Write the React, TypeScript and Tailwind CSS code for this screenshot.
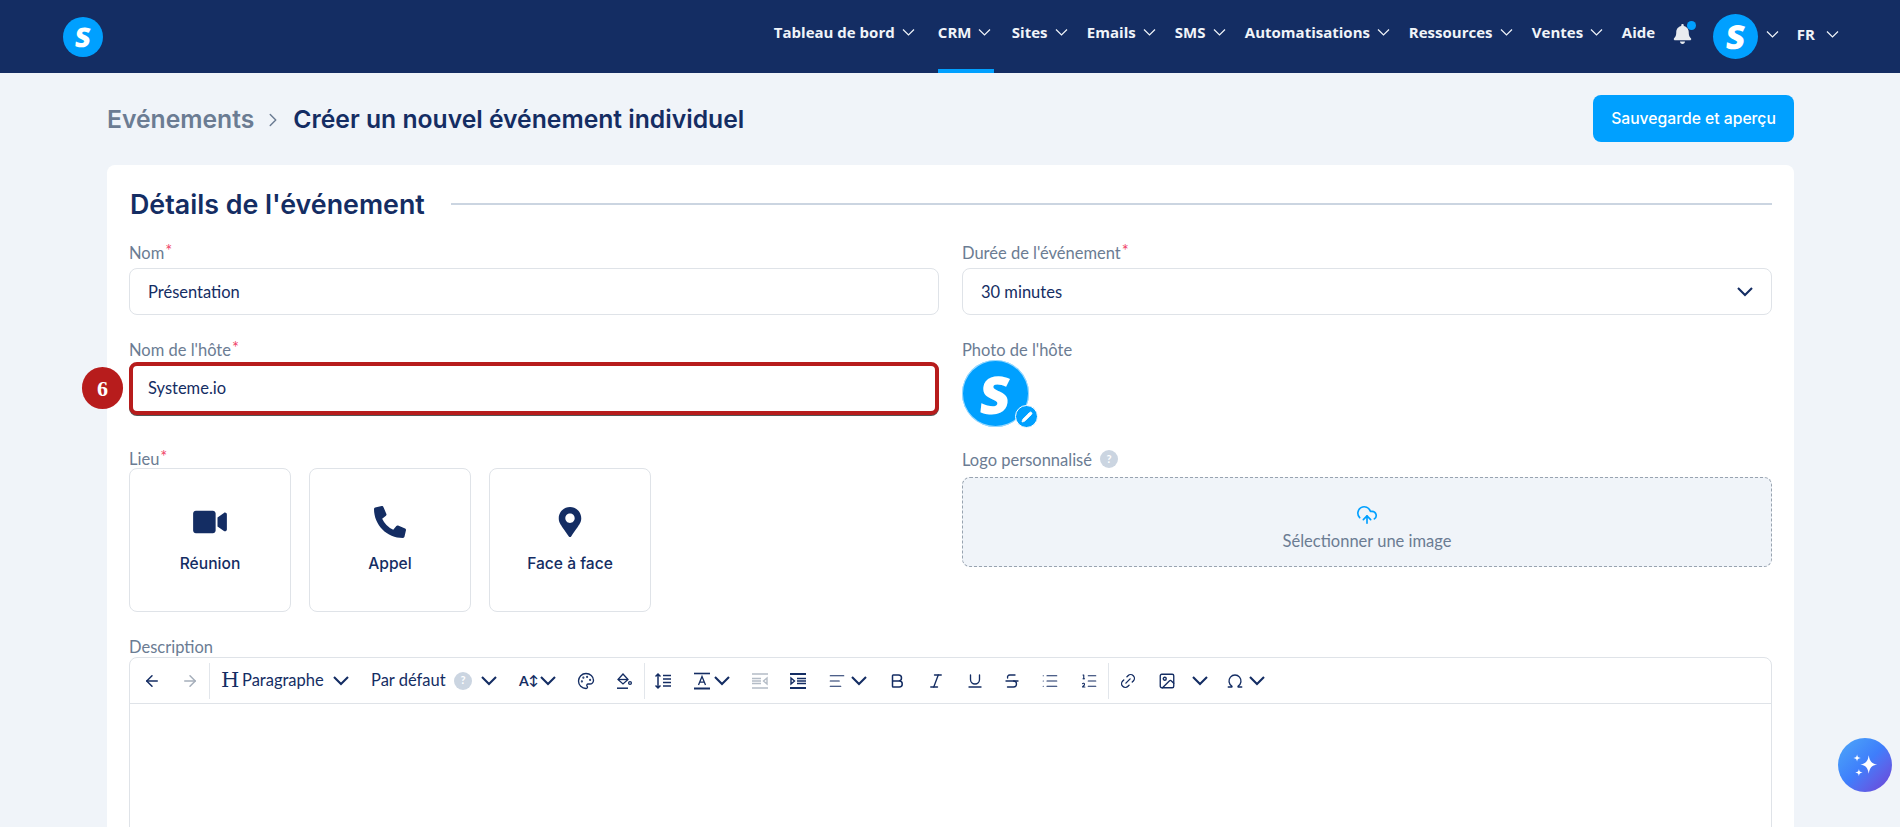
import React from "react";
import { ChevronRight, ArrowLeft, ArrowRight, Palette, Link2, Bold, Italic, Underline, Strikethrough, List, ListOrdered, Omega, CloudUpload, Image as ImageIcon, AlignLeft, Pencil } from "lucide-react";
import { FaVideo, FaPhoneAlt, FaMapMarkerAlt, FaBell } from "react-icons/fa";

function SLogo({ className }: { className: string }) {
  return (
    <div className={`flex items-center justify-center rounded-full bg-[#00a0ff] text-white font-['Open_Sans',sans-serif] font-extrabold leading-none ${className}`}>
      <span className="inline-block -skew-x-6">S</span>
    </div>
  );
}

function NavChev({ cls = "" }: { cls?: string }) {
  return (
    <svg viewBox="0 0 13 13" className={`h-[13px] w-[13px] text-[#f0f4f9] ${cls}`} fill="none" stroke="currentColor" strokeWidth="1.2">
      <path d="M1 3.5 L6.5 9 L12 3.5" />
    </svg>
  );
}

function NavItem({ label, width, active, chevron = true }: { label: string; width: string; active?: boolean; chevron?: boolean }) {
  return (
    <div className={`relative flex h-[73px] items-center pb-[9px] ${width}`}>
      <span className="font-['Open_Sans',sans-serif] text-[15px] font-bold leading-none text-[#f0f4f9]">{label}</span>
      {chevron && <NavChev cls="ml-[7px]" />}
      {active && <div className="absolute bottom-0 left-0 h-[4px] w-[56px] bg-[#00a0ff]" />}
    </div>
  );
}

function Label({ text, req, cls = "" }: { text: string; req?: boolean; cls?: string }) {
  return (
    <div className={`flex h-5 items-center pt-[1px] text-[16.5px] leading-5 text-[#6b7c93] ${cls}`}>
      {text}
      {req && <span className="ml-[1px] -mt-[3px] text-[#f0476b]">*</span>}
    </div>
  );
}

function Help({ cls = "" }: { cls?: string }) {
  return (
    <span className={`flex h-[18px] w-[18px] items-center justify-center rounded-full bg-[#cbd5e1] text-[11px] font-bold text-white ${cls}`}>?</span>
  );
}

function Tile({ icon, label }: { icon: React.ReactNode; label: string }) {
  return (
    <div className="flex h-[144px] w-[162px] flex-col items-center rounded-lg border border-[#dfe3e8] bg-white">
      <div className="mt-[35px] flex h-9 items-center justify-center text-[#142d63]">{icon}</div>
      <div className="mt-[14px] font-['Inter',sans-serif] text-[15.6px] font-medium leading-5 text-[#142d63]">{label}</div>
    </div>
  );
}

const Sep = ({ cls = "" }: { cls?: string }) => <div className={`h-[36px] w-px bg-[#e2e6eb] ${cls}`} />;
const Chev = ({ cls = "" }: { cls?: string }) => (
  <svg viewBox="0 0 20 20" className={`h-[20px] w-[20px] text-[#142d63] ${cls}`} fill="none" stroke="currentColor" strokeWidth="2.1">
    <path d="M3 6 L10 13 L17 6" />
  </svg>
);
const ic = "h-[18px] w-[18px] text-[#142d63]";

function FillIcon() {
  return (
    <svg viewBox="0 0 18 18" className={ic} fill="none" stroke="currentColor" strokeWidth="1.3">
      <path d="M8 2 L3 7.5 L8 12 L13 7.5 Z" />
      <path d="M3 7.5 H13" />
      <circle cx="15" cy="11" r="1.4" />
      <path d="M2 16.2 H13" strokeWidth="1.5" />
    </svg>
  );
}
function LineHeightIcon() {
  return (
    <svg viewBox="0 0 18 18" className={ic} fill="none" stroke="currentColor" strokeWidth="1.5">
      <path d="M4 2 V16 M1.5 4.5 L4 2 L6.5 4.5 M1.5 13.5 L4 16 L6.5 13.5" />
      <path d="M9 3.5 H17 M9 7 H17 M9 10.5 H17 M9 14 H17" />
    </svg>
  );
}
function TextColorIcon() {
  return (
    <svg viewBox="0 0 18 18" className={ic} fill="none" stroke="currentColor" strokeWidth="1.3">
      <path d="M1 1.5 H17" strokeWidth="1.6" />
      <path d="M5.5 13 L9 4.5 L12.5 13 M6.7 10.2 H11.3" />
      <path d="M1 16.5 H17" strokeWidth="2" />
    </svg>
  );
}
function IndentIcon({ out }: { out?: boolean }) {
  return (
    <svg viewBox="0 0 18 18" className={out ? "h-[18px] w-[18px] text-[#b4bcc6]" : ic} fill="none" stroke="currentColor" strokeWidth="1.4">
      <path d="M1 2 H17 M1 16 H17" strokeWidth={out ? 1.5 : 1.8} />
      {out ? (
        <>
          <path d="M1 6.5 H10 M1 9 H10 M1 11.5 H10" />
          <path d="M16 6 L12.5 9 L16 12 Z" />
        </>
      ) : (
        <>
          <path d="M2 6 L5.5 9 L2 12 Z" />
          <path d="M8 6.5 H17 M8 9 H17 M8 11.5 H17" />
        </>
      )}
    </svg>
  );
}

function Field({ children }: { children: React.ReactNode }) {
  return (
    <div className="mt-[6px] flex h-[47px] items-center rounded-lg border border-[#dfe3e8] bg-white px-[18px] pt-[1px] text-[16.5px] text-[#142d63]">
      {children}
    </div>
  );
}

export default function App() {
  return (
    <div className="h-[827px] w-[1900px] overflow-hidden bg-[#f0f4f9] font-['Lato',sans-serif]">
      <header className="flex h-[73px] items-center bg-[#142d63] pl-[63px] pr-[61px]">
        <SLogo className="h-[40px] w-[40px] text-[27px]" />
        <nav className="ml-auto flex items-center">
          <NavItem label="Tableau de bord" width="w-[164px]" />
          <NavItem label="CRM" width="w-[74px]" active />
          <NavItem label="Sites" width="w-[75px]" />
          <NavItem label="Emails" width="w-[88px]" />
          <NavItem label="SMS" width="w-[70px]" />
          <NavItem label="Automatisations" width="w-[164px]" />
          <NavItem label="Ressources" width="w-[123px]" />
          <NavItem label="Ventes" width="w-[90px]" />
          <NavItem label="Aide" width="w-[51px]" chevron={false} />
          <div className="relative mb-[5px] mr-[21px]">
            <FaBell className="h-[20px] w-[19px] text-[#e8ebef]" />
            <span className="absolute -right-[4px] -top-[3px] h-[9px] w-[9px] rounded-full bg-[#00a0ff]" />
          </div>
          <SLogo className="mb-[1px] h-[45px] w-[45px] text-[33px]" />
          <NavChev cls="ml-[8px] mb-[5px]" />
          <span className="mb-[5px] ml-[18px] font-['Open_Sans',sans-serif] text-[15px] font-bold text-[#f0f4f9]">FR</span>
          <NavChev cls="ml-[11px] mb-[5px]" />
        </nav>
      </header>

      <main className="pl-[107px] pr-[106px]">
        <div className="flex items-center pt-[22px] font-['Inter',sans-serif]">
          <span className="pt-[2px] text-[24.7px] font-semibold text-[#6b7c93]">Evénements</span>
          <ChevronRight className="ml-[8px] mr-[9px] mt-[2px] h-[22px] w-[22px] text-[#6b7c93]" strokeWidth={1.6} />
          <span className="pt-[2px] text-[24.7px] font-semibold text-[#142d63]">Créer un nouvel événement individuel</span>
          <button className="ml-auto h-[47px] w-[201px] rounded-lg bg-[#00a0ff] text-[15.7px] font-medium text-white">Sauvegarde et aperçu</button>
        </div>

        <section className="mt-[23px] h-[700px] rounded-lg bg-white px-[22px] pt-[19px]">
          <div className="flex h-10 items-center">
            <h1 className="pt-[1px] pl-[1px] font-['Inter',sans-serif] text-[26.8px] font-semibold text-[#142d63]">Détails de l'événement</h1>
            <div className="ml-[26px] h-[2px] flex-1 bg-[#cbd5e1]" />
          </div>

          <div className="mt-[18px] flex gap-[23px]">
            <div className="flex-1">
              <Label text="Nom" req />
              <Field>Présentation</Field>

              <Label text="Nom de l'hôte" req cls="mt-[24px]" />
              <div className="relative mt-[3px] flex h-[53px] items-center rounded-lg border-[4px] border-[#b71c1c] bg-white px-[15px] text-[16.5px] text-[#142d63] shadow-[0_1px_0_#555]">
                Systeme.io
                <div className="absolute left-[-51px] top-[1px] flex h-[42px] w-[41px] items-center justify-center rounded-full bg-[#b71c1c] font-['Liberation_Serif',serif] text-[22px] font-bold text-white">6</div>
              </div>

              <Label text="Lieu" req cls="mt-[33px]" />
              <div className="flex gap-[18px]">
                <Tile icon={<FaVideo className="h-[30px] w-[36px]" />} label="Réunion" />
                <Tile icon={<FaPhoneAlt className="h-[32px] w-[32px]" />} label="Appel" />
                <Tile icon={<FaMapMarkerAlt className="h-[30px] w-[24px]" />} label="Face à face" />
              </div>
            </div>

            <div className="flex-1">
              <Label text="Durée de l'événement" req />
              <div className="mt-[6px] flex h-[47px] items-center justify-between rounded-lg border border-[#dfe3e8] bg-white pl-[18px] pr-[16px] pt-[1px] text-[16.5px] text-[#142d63]">
                30 minutes
                <Chev />
              </div>

              <Label text="Photo de l'hôte" cls="mt-[24px]" />
              <div className="relative mt-[1px] h-[68px] w-[68px]">
                <div className="flex h-[67px] w-[67px] items-center justify-center rounded-full bg-[#00a0ff] font-['Open_Sans',sans-serif] text-[52px] font-extrabold leading-none text-white ring-1 ring-inset ring-white/60">
                  <span className="inline-block -skew-x-6">S</span>
                </div>
                <div className="absolute -right-[8px] bottom-0 flex h-[23px] w-[23px] items-center justify-center rounded-full border border-white bg-[#00a0ff]">
                  <Pencil className="h-[12px] w-[12px] text-white" fill="white" strokeWidth={1.5} />
                </div>
              </div>

              <div className="mt-[21px] flex h-5 items-center">
                <Label text="Logo personnalisé" />
                <Help cls="ml-[8px]" />
              </div>
              <div className="mt-[8px] flex h-[90px] flex-col items-center rounded-lg border border-dashed border-[#98a3b0] bg-[#f0f4f9] pt-[26px]">
                <CloudUpload className="h-[22px] w-[22px] text-[#00a0ff]" strokeWidth={1.8} />
                <div className="mt-[5px] text-[16.5px] leading-5 text-[#6b7c93]">Sélectionner une image</div>
              </div>
            </div>
          </div>

          <Label text="Description" cls="mt-[24px] mb-[1px]" />
          <div className="h-[300px] rounded-lg border border-[#dfe3e8]">
            <div className="flex h-[46px] items-center border-b border-[#dfe3e8] pl-[13px] text-[16.5px] text-[#142d63]">
              <ArrowLeft className={ic} strokeWidth={2} />
              <ArrowRight className="ml-[20px] h-[18px] w-[18px] text-[#a5aeba]" strokeWidth={2} />
              <Sep cls="ml-[10px]" />
              <span className="ml-[11px] w-[16px] font-['DejaVu_Serif',serif] text-[21px] leading-none">H</span>
              <span className="ml-[5px] w-[86px] whitespace-nowrap">Paragraphe</span>
              <Chev cls="ml-[3px]" />
              <span className="ml-[20px] w-[76px] whitespace-nowrap">Par défaut</span>
              <Help cls="ml-[7px]" />
              <Chev cls="ml-[7px]" />
              <span className="ml-[20px] flex w-[16px] items-center text-[14px] font-bold">A<span className="text-[13px] leading-none">↕</span></span>
              <Chev cls="ml-[3px]" />
              <Palette className={`${ic} ml-[19px]`} strokeWidth={1.8} />
              <span className="ml-[20px]"><FillIcon /></span>
              <Sep cls="ml-[11px]" />
              <span className="ml-[9px]"><LineHeightIcon /></span>
              <span className="ml-[21px]"><TextColorIcon /></span>
              <Chev cls="ml-[1px]" />
              <span className="ml-[19px]"><IndentIcon out /></span>
              <span className="ml-[20px]"><IndentIcon /></span>
              <AlignLeft className={`${ic} ml-[21px]`} strokeWidth={1.5} />
              <Chev cls="ml-[3px]" />
              <Bold className={`${ic} ml-[19px]`} strokeWidth={2} />
              <Italic className={`${ic} ml-[21px]`} strokeWidth={1.8} />
              <Underline className={`${ic} ml-[21px]`} strokeWidth={1.8} />
              <Strikethrough className={`${ic} ml-[19px]`} strokeWidth={1.8} />
              <List className={`${ic} ml-[20px]`} strokeWidth={1.5} />
              <ListOrdered className={`${ic} ml-[21px]`} strokeWidth={1.5} />
              <Sep cls="ml-[10px]" />
              <Link2 className={`${ic} ml-[10px] -rotate-45`} strokeWidth={1.8} />
              <ImageIcon className={`${ic} ml-[21px]`} strokeWidth={1.8} />
              <Chev cls="ml-[14px]" />
              <Omega className={`${ic} ml-[16px]`} strokeWidth={1.8} />
              <Chev cls="ml-[3px]" />
            </div>
          </div>
        </section>
      </main>

      <div className="fixed left-[1838px] top-[738px] flex h-[54px] w-[54px] items-center justify-center rounded-full bg-gradient-to-br from-[#4fa8f8] via-[#3f7dfb] to-[#6b3fd4]">
        <svg viewBox="0 0 30 30" className="h-[28px] w-[28px]" fill="white">
          <path d="M19 4.5 C20 11 22 13.5 28 14.5 C22 15.5 20 18 19 24.5 C18 18 16 15.5 10 14.5 C16 13.5 18 11 19 4.5 Z" />
          <path d="M6.5 3.5 C7 6.5 7.5 7 10.5 7.5 C7.5 8 7 8.5 6.5 11.5 C6 8.5 5.5 8 2.5 7.5 C5.5 7 6 6.5 6.5 3.5 Z" />
          <path d="M8.5 19 C9 22 9.5 22.5 12.5 23 C9.5 23.5 9 24 8.5 27 C8 24 7.5 23.5 4.5 23 C7.5 22.5 8 22 8.5 19 Z" />
        </svg>
      </div>
    </div>
  );
}
